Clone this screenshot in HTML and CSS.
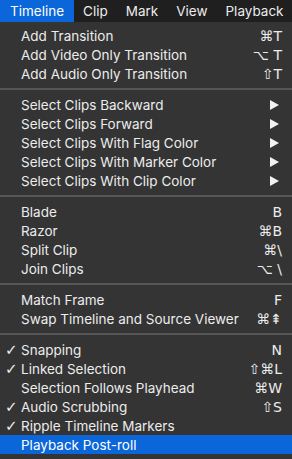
FILE: index.html
```html
<!DOCTYPE html>
<html lang="en">
    <head>
        <title>Timeline Menu</title>
        <meta charset="UTF-8">
        <meta name="viewport" content="width=device-width, initial-scale=1">
        <link rel="stylesheet" href="styles.css">
    </head>

    <body>
        <div class="menubar">
            <span class="menubar-item active">Timeline</span>
            <span class="menubar-item">Clip</span>
            <span class="menubar-item">Mark</span>
            <span class="menubar-item">View</span>
            <span class="menubar-item">Playback</span>
        </div>

        <div class="menu">
            <div class="row"><span class="check"></span><span class="label">Add Transition</span><span class="key">⌘T</span></div>
            <div class="row"><span class="check"></span><span class="label">Add Video Only Transition</span><span class="key">⌥ T</span></div>
            <div class="row"><span class="check"></span><span class="label">Add Audio Only Transition</span><span class="key">⇧T</span></div>

            <div class="separator"></div>

            <div class="row"><span class="check"></span><span class="label">Select Clips Backward</span><span class="arrow"></span></div>
            <div class="row"><span class="check"></span><span class="label">Select Clips Forward</span><span class="arrow"></span></div>
            <div class="row"><span class="check"></span><span class="label">Select Clips With Flag Color</span><span class="arrow"></span></div>
            <div class="row"><span class="check"></span><span class="label">Select Clips With Marker Color</span><span class="arrow"></span></div>
            <div class="row"><span class="check"></span><span class="label">Select Clips With Clip Color</span><span class="arrow"></span></div>

            <div class="separator"></div>

            <div class="row"><span class="check"></span><span class="label">Blade</span><span class="key">B</span></div>
            <div class="row"><span class="check"></span><span class="label">Razor</span><span class="key">⌘B</span></div>
            <div class="row"><span class="check"></span><span class="label">Split Clip</span><span class="key">⌘\</span></div>
            <div class="row"><span class="check"></span><span class="label">Join Clips</span><span class="key">⌥ \</span></div>

            <div class="separator"></div>

            <div class="row"><span class="check"></span><span class="label">Match Frame</span><span class="key">F</span></div>
            <div class="row"><span class="check"></span><span class="label">Swap Timeline and Source Viewer</span><span class="key">⌘⇞</span></div>

            <div class="separator"></div>

            <div class="row"><span class="check">✓</span><span class="label">Snapping</span><span class="key">N</span></div>
            <div class="row"><span class="check">✓</span><span class="label">Linked Selection</span><span class="key">⇧⌘L</span></div>
            <div class="row"><span class="check"></span><span class="label">Selection Follows Playhead</span><span class="key">⌘W</span></div>
            <div class="row"><span class="check">✓</span><span class="label">Audio Scrubbing</span><span class="key">⇧S</span></div>
            <div class="row"><span class="check">✓</span><span class="label">Ripple Timeline Markers</span><span class="key"></span></div>
            <div class="row selected"><span class="check"></span><span class="label">Playback Post-roll</span><span class="key"></span></div>
        </div>
    </body>
</html>
```

FILE: styles.css
```css
body {
    margin: 0;
    width: 292px;
    height: 459px;
    overflow: hidden;
    background-color: #343434;
    font-family: Inter, "Noto Sans", sans-serif;
    font-size: 13.5px;
    color: #ececec;
}

.menubar {
    display: flex;
    height: 22px;
    background-color: #1f1f1f;
    white-space: nowrap;
}
.menubar-item {
    padding: 0 9px;
    line-height: 22px;
}
.menubar-item.active {
    padding: 0 10px;
    background-color: #0b66d9;
    color: #fff;
}

.menu {
    padding-top: 4px;
    background-color: #343434;
}
.row {
    display: flex;
    align-items: center;
    height: 19px;
}
.check {
    width: 16px;
    padding-left: 5px;
    font-family: "DejaVu Sans", sans-serif;
    font-size: 15px;
    font-weight: bold;
}
.label {
    flex: 1;
}
.key {
    padding-right: 10px;
    font-family: "DejaVu Sans", sans-serif;
    font-size: 14px;
}
.arrow {
    width: 0;
    height: 0;
    margin-right: 13px;
    border-top: 5px solid transparent;
    border-bottom: 5px solid transparent;
    border-left: 9px solid #f2f2f2;
}
.selected {
    background-color: #0b66d9;
    color: #fff;
}

.separator {
    height: 2px;
    margin: 5px 0;
    background-color: #565656;
}
```
